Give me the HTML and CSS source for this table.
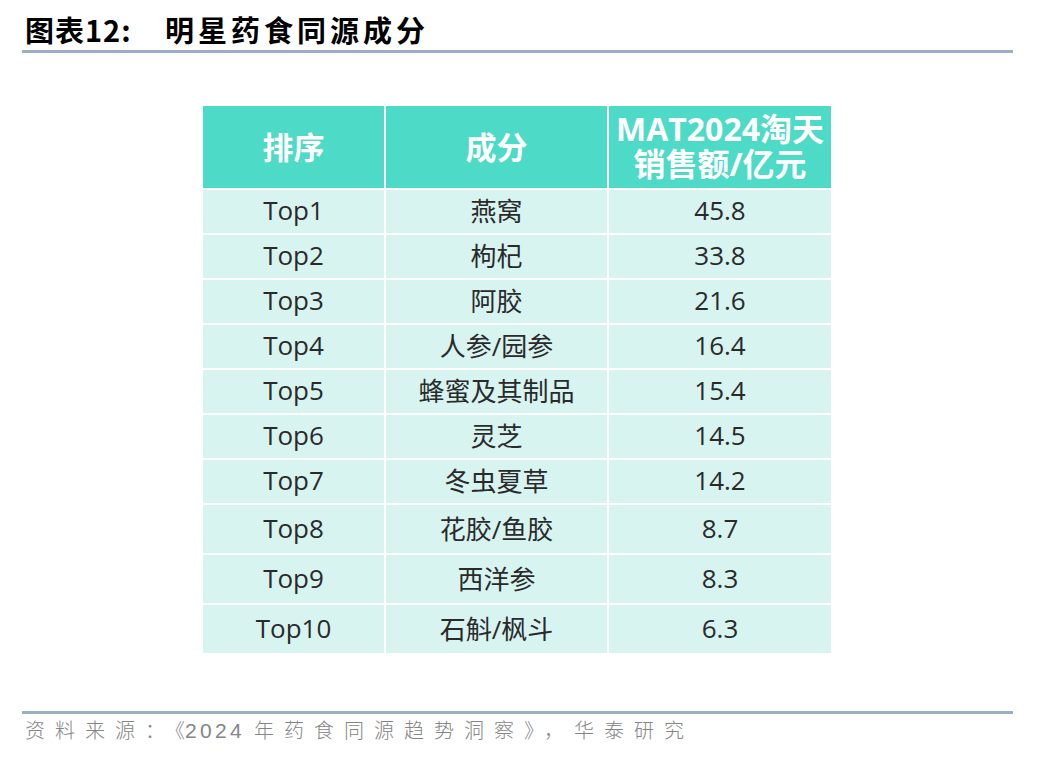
FILE: index.html
```html
<!DOCTYPE html>
<html lang="zh">
<head>
<meta charset="utf-8">
<link rel="stylesheet" href="styles.css">
</head>
<body>
<div class="page">
  <div class="title"><span class="label">图表12:</span><span class="name">明星药食同源成分</span></div>
  <div class="rule"></div>
  <div class="table">
    <div class="cell head">排序</div>
    <div class="cell head">成分</div>
    <div class="cell head two"><div class="line">MAT2024淘天</div><div class="line">销售额/亿元</div></div>

    <div class="cell">Top1</div><div class="cell">燕窝</div><div class="cell">45.8</div>
    <div class="cell">Top2</div><div class="cell">枸杞</div><div class="cell">33.8</div>
    <div class="cell">Top3</div><div class="cell">阿胶</div><div class="cell">21.6</div>
    <div class="cell">Top4</div><div class="cell">人参/园参</div><div class="cell">16.4</div>
    <div class="cell">Top5</div><div class="cell">蜂蜜及其制品</div><div class="cell">15.4</div>
    <div class="cell">Top6</div><div class="cell">灵芝</div><div class="cell">14.5</div>
    <div class="cell">Top7</div><div class="cell">冬虫夏草</div><div class="cell">14.2</div>
    <div class="cell">Top8</div><div class="cell">花胶/鱼胶</div><div class="cell">8.7</div>
    <div class="cell">Top9</div><div class="cell">西洋参</div><div class="cell">8.3</div>
    <div class="cell">Top10</div><div class="cell">石斛/枫斗</div><div class="cell">6.3</div>
  </div>
  <div class="rule bottom"></div>
  <div class="source">资料来源：<span class="tight">《</span><span class="num">2024 </span>年药食同源趋势洞察》，华泰研究</div>
</div>
</body>
</html>
```

FILE: styles.css
```css
html, body {
  margin: 0;
  padding: 0;
  background: #ffffff;
}

.page {
  width: 1048px;
  height: 760px;
  padding: 0 35px 0 22px;
  box-sizing: border-box;
}

.title {
  padding: 14px 0 0 3px;
  height: 37px;
  box-sizing: border-box;
  font-family: "Noto Sans CJK SC", sans-serif;
  font-weight: 700;
  font-size: 29px;
  line-height: 30px;
  color: #000;
  display: flex;
  white-space: nowrap;
}

.title .label {
  width: 140px;
  letter-spacing: 1px;
}

.title .name {
  letter-spacing: 4px;
}

.rule {
  height: 3px;
  background: #9aafc7;
  margin-top: 13px;
}

.table {
  margin: 53px 0 0 181px;
  width: 628px;
  display: grid;
  grid-template-columns: 181px 221px 222px;
  grid-template-rows: 82px repeat(7, 43px) repeat(3, 48px);
  gap: 2px;
  background: #ffffff;
}

.cell {
  background: #d8f4f1;
  display: flex;
  align-items: center;
  justify-content: center;
  font-family: "Open Sans", "Noto Sans CJK SC", sans-serif;
  font-size: 26px;
  color: #2a2a2a;
  padding-bottom: 3px;
  box-sizing: border-box;
  white-space: nowrap;
}

.cell.head {
  background: #4ddac7;
  color: #ffffff;
  font-family: "Noto Sans CJK SC", sans-serif;
  font-weight: 700;
  font-size: 31px;
  padding-bottom: 4px;
}

.cell.head.two {
  flex-direction: column;
  font-family: "Open Sans", "Noto Sans CJK SC", sans-serif;
  font-size: 32px;
  padding-bottom: 2px;
}

.cell.head.two .line {
  height: 35px;
  line-height: 35px;
}

.rule.bottom {
  margin-top: 58px;
}

.source {
  padding: 1px 0 0 3px;
  font-family: "Noto Sans CJK SC", sans-serif;
  font-weight: 300;
  font-size: 20px;
  line-height: 30px;
  letter-spacing: 10px;
  color: #858585;
  white-space: nowrap;
}

.source .tight {
  letter-spacing: 0;
}

.source .num {
  font-family: "Liberation Sans", sans-serif;
  font-size: 21px;
  letter-spacing: 3.3px;
}
```
